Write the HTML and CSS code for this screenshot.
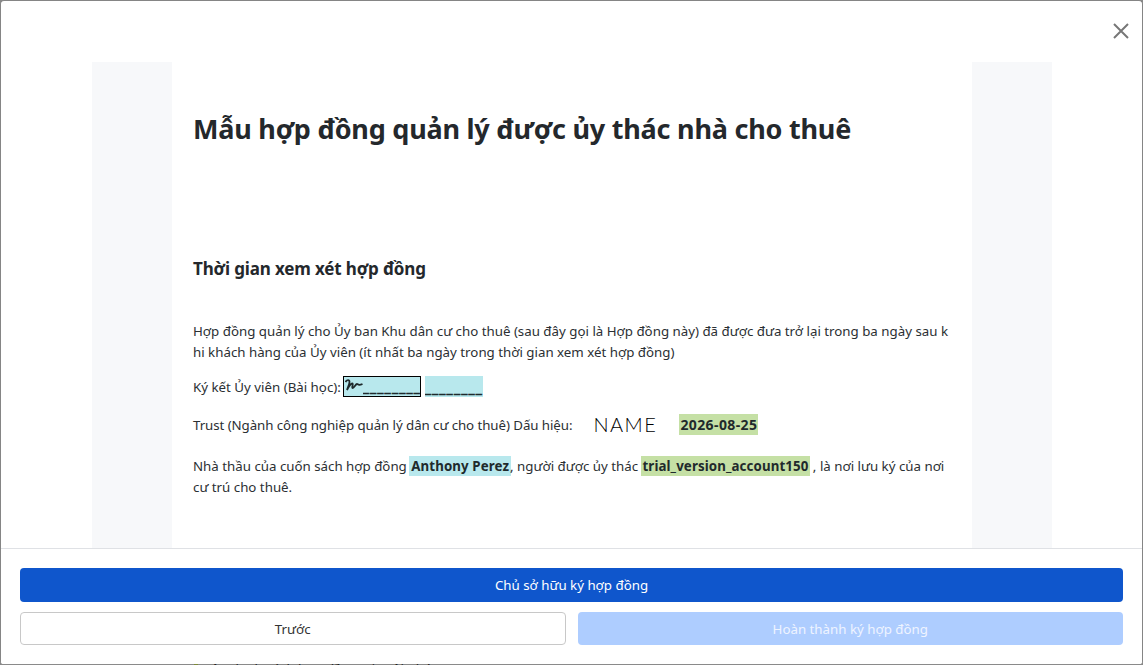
FILE: index.html
```html
<!DOCTYPE html>
<html lang="vi">
<head>
    <meta charset="utf-8">
    <meta name="viewport" content="width=device-width, initial-scale=1.0">
    <title>Mẫu hợp đồng quản lý</title>
    <link rel="stylesheet" href="styles.css">
</head>
<body>
    <!-- Page behind the dialog, only one row of it shows -->
    <div class="behind-text">Tên danh sách hợp đồng của tôi nhé</div>

    <div class="modal">
        <button class="close-btn" aria-label="Đóng">
            <svg width="16" height="16" viewBox="0 0 16 16">
                <path d="M1 1 L15 15 M15 1 L1 15" stroke="#777" stroke-width="2" fill="none"/>
            </svg>
        </button>

        <div class="modal-body">
            <div class="doc">
                <div class="doc-page">
                    <h1>Mẫu hợp đồng quản lý được ủy thác nhà cho thuê</h1>
                    <h2>Thời gian xem xét hợp đồng</h2>
                    <p class="intro">Hợp đồng quản lý cho Ủy ban Khu dân cư cho thuê (sau đây gọi là Hợp đồng này) đã được đưa trở lại trong ba ngày sau k<br>hi khách hàng của Ủy viên (ít nhất ba ngày trong thời gian xem xét hợp đồng)</p>
                    <div class="sign-row">
                        <span>Ký kết Ủy viên (Bài học):</span>
                        <span class="field field-active">
                            <svg class="squiggle" width="18" height="12" viewBox="0 0 18 12">
                                <path d="M0.5 3 C2 0.5 4.5 0.5 4.5 3 C4.5 5.5 2.5 9 2 11 C3.5 8 6.5 3.5 7.5 4.5 C8.5 5.5 6.5 8.5 7.5 9 C9 9.5 10.5 5 12 5 C13 5 13 7 17.5 5" stroke="#1f2a2c" stroke-width="1.8" fill="none"/>
                            </svg>
                            <span class="blanks blanks-short">________</span>
                        </span>
                        <span class="field"><span class="blanks">________</span></span>
                    </div>
                    <div class="trust-row">
                        <span class="trust-label">Trust (Ngành công nghiệp quản lý dân cư cho thuê) Dấu hiệu:</span>
                        <span class="sign-name">NAME</span>
                        <mark class="tag-green tag-date">2026-08-25</mark>
                    </div>
                    <p class="contractor">Nhà thầu của cuốn sách hợp đồng <mark class="tag-blue">Anthony Perez</mark>, người được ủy thác <mark class="tag-green">trial_version_account150</mark> , là nơi lưu ký của nơi<br>cư trú cho thuê.</p>
                </div>
            </div>
        </div>

        <div class="modal-footer">
            <button class="btn btn-primary">Chủ sở hữu ký hợp đồng</button>
            <div class="btn-row">
                <button class="btn btn-outline">Trước</button>
                <button class="btn btn-disabled">Hoàn thành ký hợp đồng</button>
            </div>
        </div>
    </div>
</body>
</html>
```

FILE: styles.css
```css
html, body {
    height: 100%;
}
body {
    margin: 0;
    background: #8a8a8a;
    font-family: "Noto Sans", "Open Sans", sans-serif;
    font-size: 13.3px;
    color: #2b2f33;
    overflow: hidden;
}
.behind-text {
    position: absolute;
    left: 205px;
    top: 660px;
    font-size: 13.3px;
    color: #222;
}
.behind-text::before {
    content: "";
    position: absolute;
    left: -11px;
    top: 2px;
    width: 4px;
    height: 6px;
    background: #7d8a3a;
}
.modal {
    position: relative;
    box-sizing: border-box;
    width: 1143px;
    height: 664px;
    display: flex;
    flex-direction: column;
    background: #fff;
    border: 1px solid #858585;
    border-bottom: 0;
    border-radius: 4px 4px 3px 3px;
    overflow: hidden;
}
.close-btn {
    position: absolute;
    top: 22px;
    right: 13px;
    padding: 0;
    border: 0;
    background: none;
    line-height: 0;
}
.modal-body {
    flex: 1;
    min-height: 0;
    overflow: hidden;
    padding: 61px 90px 0 91px;
}
.doc {
    height: 100%;
    background: #f7f8fa;
    padding: 0 80px;
}
.doc-page {
    height: 100%;
    background: #fff;
    padding: 47px 21px 0;
}
h1 {
    margin: 0;
    font-size: 27px;
    letter-spacing: -0.22px;
    line-height: 40px;
    font-weight: 700;
    color: #24282c;
}
h2 {
    margin: 108px 0 0;
    font-size: 17px;
    letter-spacing: -0.15px;
    line-height: 24px;
    font-weight: 700;
    color: #24282c;
}
p {
    margin: 0;
    line-height: 21px;
}
.intro {
    margin-top: 40px;
    white-space: nowrap;
}
.sign-row {
    display: flex;
    align-items: center;
    gap: 2px;
    height: 21px;
    margin-top: 13px;
}
.field {
    display: flex;
    align-items: flex-end;
    height: 21px;
    margin-left: 1px;
    background: #b8e8ed;
    font-weight: 700;
    color: #1f2a2c;
    line-height: 20px;
}
.field-active {
    box-sizing: border-box;
    width: 78px;
    margin-left: 0;
    margin-right: 1px;
    padding-left: 1px;
    border: 1px solid #000;
    justify-content: space-between;
    align-items: stretch;
}
.squiggle {
    margin-top: 2px;
    flex: none;
}
.blanks {
    display: block;
    width: 58px;
    overflow: hidden;
    font-size: 15px;
    letter-spacing: 1.1px;
    -webkit-text-stroke: 0.4px #1f2a2c;
}
.blanks-short {
    line-height: 19px;
}
.trust-row {
    display: flex;
    align-items: center;
    height: 21px;
    margin-top: 17px;
}
.trust-label {
    letter-spacing: -0.07px;
}
.sign-name {
    width: 62px;
    margin: 0 24px 0 21px;
    font-family: Lato, sans-serif;
    font-weight: 300;
    font-size: 20px;
    letter-spacing: 1.5px;
    line-height: 21px;
    color: #000;
}
mark {
    font-weight: 700;
    letter-spacing: 0.1px;
    color: #1f2a2c;
    padding: 1px 2px;
    margin: 0 -1px;
}
.tag-date {
    font-size: 14px;
    letter-spacing: 0.4px;
    padding: 1px;
    margin: 0;
}
.tag-green {
    background: #c5e0a5;
}
.tag-blue {
    background: #b8e8ed;
}
.contractor {
    margin-top: 21px;
    white-space: nowrap;
}
.modal-footer {
    display: flex;
    flex-direction: column;
    gap: 10px;
    height: 116px;
    box-sizing: border-box;
    padding: 19px 19px 0;
    background: #fff;
    border-top: 1px solid #dfe1e5;
}
.btn {
    display: block;
    width: 100%;
    padding: 0;
    border: 0;
    border-radius: 4px;
    font-family: inherit;
    font-size: 13.3px;
}
.btn-primary {
    height: 34px;
    background: #0f56cc;
    color: #fff;
}
.btn-row {
    display: grid;
    grid-template-columns: 1fr 1fr;
    gap: 12px;
}
.btn-outline {
    height: 33px;
    background: #fff;
    border: 1px solid #c8c8c8;
    color: #333;
}
.btn-disabled {
    height: 33px;
    background: #aecdff;
    color: #eef4ff;
}
```
